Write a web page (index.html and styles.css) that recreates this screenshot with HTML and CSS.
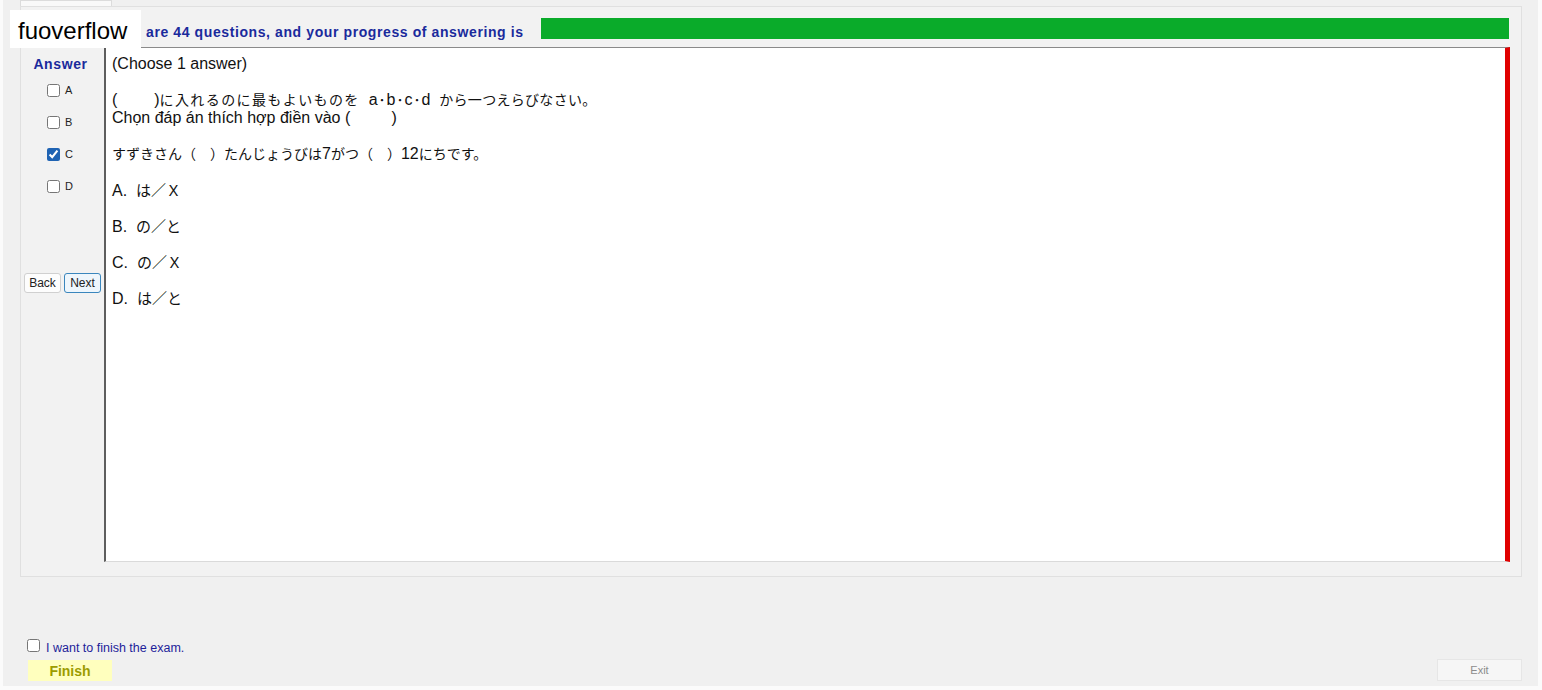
FILE: index.html
```html
<!DOCTYPE html>
<html lang="en">
<head>
  <meta charset="UTF-8" />
  <meta name="viewport" content="width=device-width, initial-scale=1.0" />
  <title>Exam</title>
  <link rel="stylesheet" href="styles.css">
</head>
<body>
  <div class="window">
    <div class="tab"></div>

    <div class="panel">
      <div class="header">
        <span class="header-text">are 44 questions, and your progress of answering is</span>
        <div class="progress"></div>
      </div>

      <div class="main">
        <div class="sidebar">
          <div class="answer-title">Answer</div>
          <label class="option"><input type="checkbox" /> A</label>
          <label class="option"><input type="checkbox" /> B</label>
          <label class="option"><input type="checkbox" checked /> C</label>
          <label class="option"><input type="checkbox" /> D</label>
          <div class="nav">
            <button class="nav-btn">Back</button>
            <button class="nav-btn next">Next</button>
          </div>
        </div>

        <div class="question">
          <p>(Choose 1 answer)</p>
          <p>(<span class="jp">&#12288;&#12288;</span>&nbsp; )<span class="jp wide">に入れるのに最もよいものを</span>&nbsp; a<span class="jp dot">･</span>b<span class="jp dot">･</span>c<span class="jp dot">･</span>d&nbsp; <span class="jp wide-s">から一つえらびなさい。</span><br>Chọn đáp án thích hợp điền vào (<span class="jp">&#12288;&#12288;</span>&nbsp;&nbsp; )</p>
          <p><span class="jp">すずきさん（&#12288;）たんじょうびは</span>7<span class="jp">がつ（&#12288;）</span>12<span class="jp">にちです。</span></p>
          <p>A.&nbsp; <span class="jp opt">は／Ｘ</span></p>
          <p>B.&nbsp; <span class="jp opt">の／と</span></p>
          <p>C.&nbsp; <span class="jp opt">の／Ｘ</span></p>
          <p>D.&nbsp; <span class="jp opt">は／と</span></p>
        </div>
      </div>
    </div>

    <div class="footer">
      <div class="finish-box">
        <label class="finish-check"><input type="checkbox" /> <span>I want to finish the exam.</span></label>
        <button class="finish">Finish</button>
      </div>
      <button class="exit">Exit</button>
    </div>

    <div class="logo">fuoverflow</div>
  </div>
</body>
</html>
```

FILE: styles.css
```css
body {
  margin: 0;
  background: #fbfbfb;
  font-family: 'Liberation Sans', Arial, sans-serif;
}
.window {
  position: relative;
  width: 1535px;
  height: 686px;
  margin-left: 3px;
  background: #f0f0f0;
  display: flex;
  flex-direction: column;
}
.tab {
  margin-left: 17px;
  width: 90px;
  height: 5px;
  background: #f9f9f9;
  border: 1px solid #dcdcdc;
  border-bottom: none;
}
.panel {
  margin: 0 16px 0 17px;
  height: 569px;
  border: 1px solid #e0e0e0;
  background: #f2f2f2;
}
.header {
  display: flex;
  align-items: flex-start;
  padding: 11px 12px 0 125px;
  height: 21px;
}
.header-text {
  padding-top: 7px;
  font-size: 14px;
  line-height: 15px;
  font-weight: bold;
  letter-spacing: 0.6px;
  color: #1a2a9c;
  white-space: nowrap;
}
.progress {
  flex: 1;
  height: 21px;
  margin-left: 17px;
  background: #0aab2a;
}
.main {
  display: flex;
  margin-top: 8px;
}
.sidebar {
  width: 83px;
  padding-top: 9px;
}
.answer-title {
  font-size: 14px;
  line-height: 16px;
  font-weight: bold;
  letter-spacing: 0.6px;
  color: #1a2a9c;
  text-align: center;
  padding-right: 4px;
  margin-bottom: 2px;
}
.option {
  display: flex;
  align-items: center;
  gap: 5px;
  height: 32px;
  padding-left: 26px;
  font-size: 11px;
  color: #222;
}
.option input, .finish-check input {
  margin: 0;
  width: 13px;
  height: 13px;
  accent-color: #1f63b3;
}
.nav {
  display: flex;
  gap: 3px;
  margin-top: 71px;
  padding-left: 3px;
}
.nav-btn {
  width: 37px;
  height: 20px;
  padding: 0;
  font-family: inherit;
  font-size: 12px;
  color: #222;
  background: #fdfdfd;
  border: 1px solid #d0d0d0;
  border-radius: 3px;
}
.nav-btn.next {
  background: #eef6fc;
  border-color: #3a86bd;
}
.question {
  width: 1393px;
  height: 506px;
  margin-right: 11px;
  padding: 7px 0 0 6px;
  background: #fff;
  border-top: 1px solid #8a8a8a;
  border-left: 2px solid #5e5e5e;
  border-bottom: 1px solid #dadada;
  border-right: 5px solid #e00000;
  font-size: 16px;
  line-height: 18px;
  color: #111;
}
.question p {
  margin: 0 0 18px;
}
.question p:nth-child(n+4) {
  position: relative;
  top: 1px;
}
.jp {
  font-family: 'Noto Sans CJK JP', sans-serif;
  font-size: 14px;
  line-height: 1;
}
.jp.wide {
  letter-spacing: 1.4px;
}
.jp.wide-s {
  letter-spacing: 0.3px;
}
.jp.dot {
  margin: 0 1px;
}
.jp.opt {
  font-size: 15px;
}
.footer {
  flex: 1;
  display: flex;
  justify-content: space-between;
  align-items: flex-end;
  padding: 0 16px 5px 24px;
}
.finish-box {
  display: flex;
  flex-direction: column;
  align-items: flex-start;
}
.finish-check {
  display: flex;
  align-items: center;
  gap: 6px;
  font-size: 12.5px;
  line-height: 14px;
  color: #1e1e9a;
}
.finish-check span {
  padding-top: 5px;
}
.finish {
  margin: 5px 0 0 1px;
  width: 84px;
  height: 21px;
  padding: 0;
  border: none;
  background: #ffffbe;
  color: #9c9c00;
  font-family: inherit;
  font-size: 14px;
  font-weight: bold;
}
.exit {
  width: 85px;
  height: 22px;
  padding: 0;
  background: #f6f6f6;
  border: 1px solid #e6e6e6;
  color: #8c8c8c;
  font-family: inherit;
  font-size: 11px;
}
.logo {
  position: absolute;
  left: 7px;
  top: 10px;
  width: 123px;
  height: 38px;
  padding-left: 8px;
  background: #fff;
  font-size: 24px;
  line-height: 42px;
  color: #000;
}
```
